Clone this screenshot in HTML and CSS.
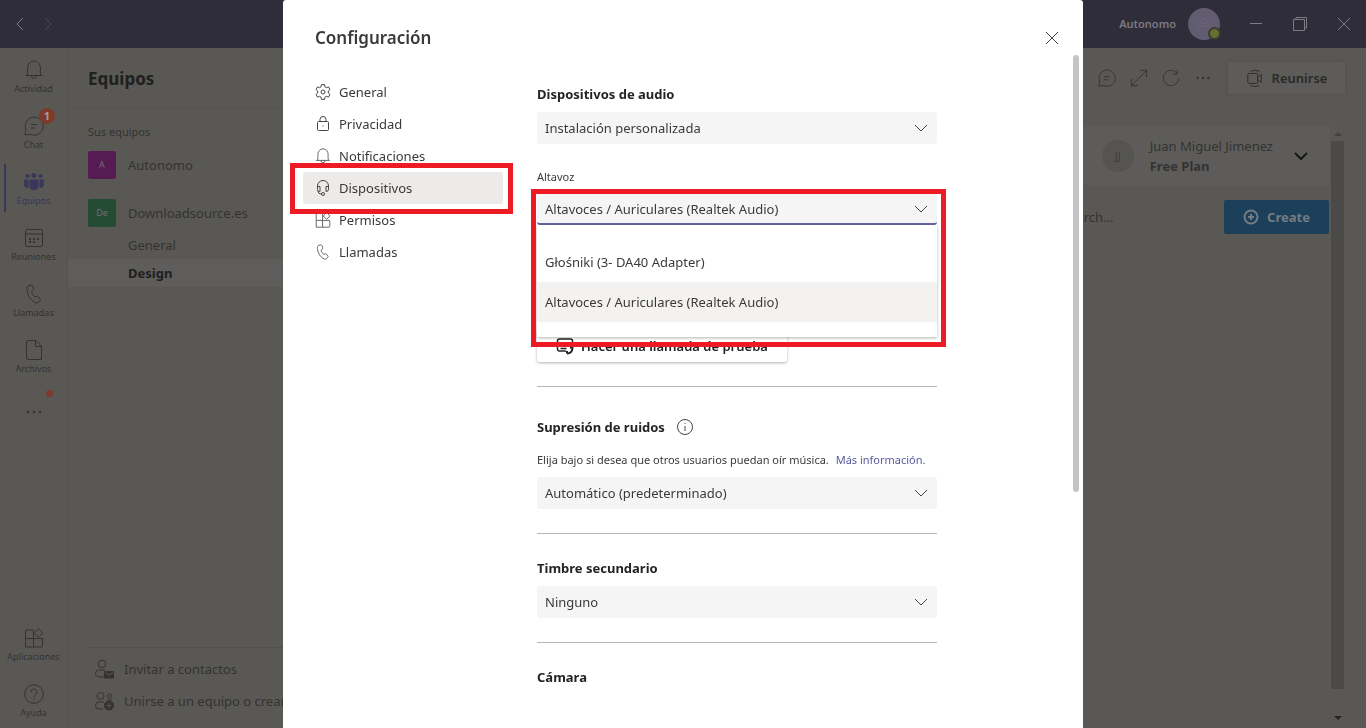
FILE: index.html
```html
<!DOCTYPE html>
<html lang="es">
<head>
    <meta charset="UTF-8">
    <meta name="viewport" content="width=device-width, initial-scale=1.0">
    <title>Configuración</title>
    <link rel="stylesheet" href="styles.css">
</head>
<body>
    <!-- shared icons -->
    <svg class="sprite" aria-hidden="true">
        <symbol id="i-bell" viewBox="0 0 20 20"><path d="M1.500 15.500h17M3 15.500c.6-1 .6-2 .6-3.500V8a6.400 7 0 0 1 12.800 0v4c0 1.500 0 2.500.6 3.500M7.500 15.500a2.500 3 0 0 0 5 0"/></symbol>
        <symbol id="i-chat" viewBox="0 0 20 20"><path d="M1 19l.9-5.500A9 9 0 1 1 6.500 18.300zM7 8.500h6M7 12h4"/></symbol>
        <symbol id="i-phone" viewBox="0 0 20 20"><path d="M5 1.500l2-.5c.8-.1 1.300.3 1.600 1l1 2.500c.2.700.1 1.200-.4 1.700L7.600 7.800c.5 2 1.700 3.800 3.300 5.200l2-.6c.7-.2 1.200 0 1.700.6l1.500 2c.4.600.4 1.300-.1 1.800l-1.200 1.200c-1 1-2.300 1.200-3.600.6C6.800 16.500 3.500 11.500 3 5.500 2.800 3.500 3.400 2 5 1.500z"/></symbol>
        <symbol id="i-apps" viewBox="0 0 20 20"><path d="M9.500 10.500V2h-7a1 1 0 0 0-1 1v16h16a1 1 0 0 0 1-1v-7.500h-17M9.500 10.500V19M14.500 .8l4.200 4.200-4.200 4.200L10.300 5z"/></symbol>
        <symbol id="i-down" viewBox="0 0 16 16"><path d="M2 5l6 6 6-6"/></symbol>
        <symbol id="i-close" viewBox="0 0 16 16"><path d="M2 2l12 12M14 2L2 14"/></symbol>
        <symbol id="i-dots" viewBox="0 0 20 20"><g fill="currentColor" stroke="none"><circle cx="4" cy="10" r="1.300"/><circle cx="10" cy="10" r="1.300"/><circle cx="16" cy="10" r="1.300"/></g></symbol>
    </svg>

    <div class="app">
        <header class="titlebar">
            <div class="history">
                <button aria-label="Atrás"><svg class="icon" viewBox="0 0 16 16"><path d="M11 2L5 8l6 6"/></svg></button>
                <button class="off" aria-label="Adelante"><svg class="icon" viewBox="0 0 16 16"><path d="M5 2l6 6-6 6"/></svg></button>
            </div>
            <div class="account">
                <span>Autonomo</span>
                <div class="me">
                    <svg class="icon" viewBox="0 0 16 16"><circle cx="8" cy="5" r="3"/><path d="M2 14v-2q0-2 2-2h8q2 0 2 2v2"/></svg>
                    <i class="status"></i>
                </div>
            </div>
            <div class="window-buttons">
                <button aria-label="Minimizar"><svg class="icon" viewBox="0 0 16 16"><path d="M2 7.500h12"/></svg></button>
                <button aria-label="Restaurar"><svg class="icon" viewBox="0 0 16 16"><path d="M1.500 3.500h11v11h-11zM4 3.500v-2h10.500V12h-2"/></svg></button>
                <button aria-label="Cerrar"><svg class="icon" viewBox="0 0 16 16"><use href="#i-close"/></svg></button>
            </div>
        </header>

        <div class="workspace">
            <nav class="rail">
                <a href="#"><svg class="icon big"><use href="#i-bell"/></svg>Actividad</a>
                <a href="#"><svg class="icon big"><use href="#i-chat"/></svg>Chat<b class="badge">1</b></a>
                <a href="#" class="current">
                    <svg class="icon big" viewBox="0 0 20 20"><g fill="currentColor" stroke="none"><circle cx="3.500" cy="4" r="2"/><circle cx="10" cy="3.500" r="2.500"/><circle cx="16.500" cy="4" r="2"/><path d="M0 7.500h4.500V16C1.500 16 0 14.500 0 12zM5.500 7.500h9V14q0 4-4.500 4t-4.500-4zM15.500 7.500H20V12c0 2.500-1.500 4-4.500 4z"/></g></svg>Equipos</a>
                <a href="#">
                    <svg class="icon big" viewBox="0 0 20 20"><rect x="1.500" y="1.500" width="17" height="17" rx="2"/><path d="M1.500 6h17"/><path d="M5 11h10M5 14h7" stroke-width="2" stroke-dasharray="2 2"/></svg>Reuniones</a>
                <a href="#"><svg class="icon big"><use href="#i-phone"/></svg>Llamadas</a>
                <a href="#">
                    <svg class="icon big" viewBox="0 0 20 20"><path d="M4 .5h8l5.500 5.500v13.500H4q-1.500 0-1.500-1.500V2Q2.500.5 4 .5zM11.500.5V6.500h6"/></svg>Archivos</a>
                <a href="#" class="more" aria-label="Más"><svg class="icon big"><use href="#i-dots"/></svg><i class="dot"></i></a>
                <a href="#" class="push"><svg class="icon big"><use href="#i-apps"/></svg>Aplicaciones</a>
                <a href="#">
                    <svg class="icon big" viewBox="0 0 20 20"><circle cx="10" cy="10" r="9.300"/><path d="M7 8a3 3 0 1 1 4.500 2.500q-1.500.8-1.500 2.500M10 14.500v1.500"/></svg>Ayuda</a>
            </nav>

            <aside class="teams">
                <h1>Equipos</h1>
                <h2>Sus equipos</h2>
                <a href="#" class="team"><span class="tile pink">A</span>Autonomo</a>
                <a href="#" class="team"><span class="tile green">De</span>Downloadsource.es</a>
                <div class="channels">
                    <a href="#">General</a>
                    <a href="#" class="selected">Design</a>
                </div>
                <div class="teams-footer">
                    <a href="#"><svg class="icon big" viewBox="0 0 20 20"><circle cx="8" cy="5" r="3.800"/><path d="M10 18H6q-4.500 0-4.500-3.500T4.500 11H11"/><path d="M10.500 12.500h9V19h-9z" fill="currentColor"/><path d="M11 13.500l4 2.500 4-2.500" stroke="#595855"/></svg>Invitar a contactos</a>
                    <a href="#"><svg class="icon big" viewBox="0 0 20 20"><circle cx="6.500" cy="5" r="3.500"/><circle cx="15.500" cy="5" r="2"/><path d="M9 18H5q-3.500 0-3.500-3.500T4.500 11H10M13 9h5"/><circle cx="15" cy="14.500" r="4.500" fill="currentColor"/><path d="M15 12v5M12.500 14.500h5" stroke="#595855"/></svg>Unirse a un equipo o crear uno</a>
                </div>
            </aside>

            <main class="content">
                <div class="toolbar">
                    <button aria-label="Conversación"><svg class="icon mid"><use href="#i-chat"/></svg></button>
                    <button aria-label="Expandir"><svg class="icon mid" viewBox="0 0 20 20"><path d="M2 18L18 2M11 1.500h7.500V9M1.500 11v7.500H9"/></svg></button>
                    <button aria-label="Actualizar"><svg class="icon mid" viewBox="0 0 20 20"><path d="M18.500 10A8.500 8.500 0 1 1 16.500 4.500M17 1v4.500h-5"/></svg></button>
                    <button aria-label="Más opciones"><svg class="icon mid"><use href="#i-dots"/></svg></button>
                    <button class="meet"><svg class="icon mid" viewBox="0 0 20 20"><rect x="2" y="5" width="11" height="11" rx="1"/><path d="M13 9l4-3v9l-4-3M5 2.500Q9 0 15 2.500M5 18.500q5 2 10 0"/></svg>Reunirse</button>
                </div>
                <div class="tab-view">
                    <div class="page">
                        <div class="profile">
                            <span class="initials">JJ</span>
                            <p>Juan Miguel Jimenez<br><b>Free Plan</b></p>
                            <svg class="icon heavy"><use href="#i-down"/></svg>
                        </div>
                        <div class="search-row">
                            <input type="text" placeholder="Search..." aria-label="Search">
                            <button class="create"><svg class="icon heavy" viewBox="0 0 16 16"><circle cx="8" cy="8" r="6.500"/><path d="M8 5v6M5 8h6"/></svg>Create</button>
                        </div>
                    </div>
                    <div class="scrollbar"><i class="arrow-up"></i><i class="thumb"></i><i class="arrow-down"></i></div>
                </div>
            </main>
        </div>
    </div>

    <div class="overlay">
        <div class="dialog" role="dialog" aria-labelledby="dialog-title">
            <div class="dialog-head">
                <h2 id="dialog-title">Configuración</h2>
                <button aria-label="Cerrar"><svg class="icon"><use href="#i-close"/></svg></button>
            </div>
            <div class="dialog-body">
                <nav class="sections">
                    <a href="#"><svg class="icon" viewBox="0 0 16 16"><path d="M6.500.6h3l.4 2.200 1.500.9 2.100-.8L15 5.500 13.300 7v2l1.700 1.500-1.500 2.600-2.100-.8-1.500.9-.4 2.200h-3l-.4-2.200-1.500-.9-2.100.8L1 10.500 2.700 9V7L1 5.500l1.500-2.600 2.100.8 1.500-.9z"/><circle cx="8" cy="8" r="2"/></svg>General</a>
                    <a href="#"><svg class="icon" viewBox="0 0 16 16"><rect x="2.500" y="5.500" width="11" height="9" rx="1"/><path d="M5 5.500V3.500a3 3 0 0 1 6 0v2M7.500 10h1"/></svg>Privacidad</a>
                    <a href="#"><svg class="icon"><use href="#i-bell"/></svg>Notificaciones</a>
                    <a href="#" class="active"><svg class="icon" viewBox="0 0 16 16"><path d="M2.500 8V6a5.500 5.500 0 0 1 11 0v3.500q0 2-2.500 2V6.500h2.500M2.500 6.500H5v5H4.500q-2 0-2-2V8M2.800 11q.7 3 3.200 3"/><circle cx="8" cy="14" r="1.500"/></svg>Dispositivos<i class="mark"></i></a>
                    <a href="#"><svg class="icon"><use href="#i-apps"/></svg>Permisos</a>
                    <a href="#"><svg class="icon"><use href="#i-phone"/></svg>Llamadas</a>
                </nav>

                <form class="settings">
                    <h3><label for="device">Dispositivos de audio</label></h3>
                    <div class="select">
                        <select id="device"><option>Instalación personalizada</option></select>
                        <svg class="icon"><use href="#i-down"/></svg>
                    </div>

                    <label class="small" for="speaker">Altavoz</label>
                    <div class="select open">
                        <select id="speaker"><option>Altavoces / Auriculares (Realtek Audio)</option></select>
                        <svg class="icon"><use href="#i-down"/></svg>
                        <ul class="menu" role="listbox" aria-label="Altavoz">
                            <li role="option">Głośniki (3- DA40 Adapter)</li>
                            <li role="option" aria-selected="true">Altavoces / Auriculares (Realtek Audio)</li>
                        </ul>
                        <i class="mark"></i>
                    </div>

                    <button type="button" class="test-call"><svg class="icon mid" viewBox="0 0 18 18"><path d="M1.500 12V4q0-2 2-2h11q2 0 2 2v6M1.500 11v1q0 2 2 2H10M4.500 8.500h8M4.500 11.500h6" stroke-width="1.500"/><path d="M11 16.500q5 0 5.500-5.500l-2.500-.5M11 16.500v-2.500" stroke-width="2"/></svg>Hacer una llamada de prueba</button>
                    <hr>

                    <h3 class="tall"><label for="noise">Supresión de ruidos</label>
                        <svg class="icon" viewBox="0 0 16 16"><circle cx="8" cy="8" r="7.500"/><path d="M8 7v5M8 4v1"/></svg></h3>
                    <p>Elija bajo si desea que otros usuarios puedan oír música. <a href="#">Más información.</a></p>
                    <div class="select">
                        <select id="noise"><option>Automático (predeterminado)</option></select>
                        <svg class="icon"><use href="#i-down"/></svg>
                    </div>
                    <hr>

                    <h3><label for="ring">Timbre secundario</label></h3>
                    <div class="select">
                        <select id="ring"><option>Ninguno</option></select>
                        <svg class="icon"><use href="#i-down"/></svg>
                    </div>
                    <hr>

                    <h3>Cámara</h3>
                </form>
            </div>
            <i class="dialog-thumb"></i>
        </div>
    </div>
</body>
</html>
```
FILE: styles.css
```css
* {
    box-sizing: border-box;
}
body {
    margin: 0;
    height: 100vh;
    overflow: hidden;
    font-family: "Noto Sans", "Open Sans", sans-serif;
    font-size: 13px;
    line-height: 20px;
    color: #343331;
    background-color: #595855;
}
h1, h2, h3, p, ul {
    margin: 0;
    padding: 0;
}
a {
    color: inherit;
    text-decoration: none;
}
button, select, input {
    font: inherit;
    color: inherit;
    background: none;
    border: 0;
    padding: 0;
}
button {
    display: flex;
    align-items: center;
    justify-content: center;
}
.sprite {
    position: absolute;
    width: 0;
    height: 0;
}
.icon {
    width: 16px;
    height: 16px;
    flex: none;
    fill: none;
    stroke: currentColor;
    stroke-width: 1;
}
.icon.mid {
    width: 18px;
    height: 18px;
}
.icon.big {
    width: 20px;
    height: 20px;
}
.icon.heavy {
    stroke-width: 2;
}

/* window */
.app {
    display: flex;
    flex-direction: column;
    height: 100%;
}
.titlebar {
    display: flex;
    align-items: center;
    height: 48px;
    flex: none;
    background-color: #2f2d39;
    color: #7c7a83;
}
.history {
    display: flex;
    flex: 1;
    gap: 12px;
    padding-left: 12px;
}
.history .off {
    opacity: 0.4;
}
.account {
    display: flex;
    align-items: center;
    gap: 12px;
    padding-right: 14px;
    font-size: 11px;
    font-weight: 600;
}
.me {
    position: relative;
    display: flex;
    align-items: center;
    justify-content: center;
    width: 32px;
    height: 32px;
    border-radius: 50%;
    background-color: #625c70;
    color: #6a6478;
}
.status {
    position: absolute;
    right: -1px;
    bottom: 0;
    width: 13px;
    height: 13px;
    border: 2px solid #3a3a35;
    border-radius: 50%;
    background-color: #67702f;
}
.window-buttons {
    display: flex;
}
.window-buttons button {
    width: 44px;
    height: 48px;
}
.workspace {
    display: flex;
    flex: 1;
    min-height: 0;
}

/* left rail */
.rail {
    display: flex;
    flex-direction: column;
    width: 68px;
    flex: none;
    border-right: 1px solid #53524f;
    font-size: 9px;
    line-height: 12px;
}
.rail a {
    position: relative;
    display: flex;
    flex-direction: column;
    align-items: center;
    gap: 3px;
    height: 56px;
    padding-top: 12px;
}
.rail .current {
    color: #39375a;
}
.rail .current::before {
    content: "";
    position: absolute;
    left: 4px;
    top: 4px;
    width: 2px;
    height: 48px;
    background-color: #39375a;
}
.rail .more {
    padding-top: 18px;
}
.rail .push {
    margin-top: auto;
}
.badge, .dot {
    position: absolute;
    border-radius: 50%;
    background-color: #7c3b2d;
}
.badge {
    left: 39px;
    top: 4px;
    width: 16px;
    height: 16px;
    font-size: 11px;
    line-height: 16px;
    text-align: center;
    color: #a59c97;
}
.dot {
    left: 46px;
    top: 6px;
    width: 7px;
    height: 7px;
}

/* teams list */
.teams {
    display: flex;
    flex-direction: column;
    width: 320px;
    flex: none;
    padding-bottom: 11px;
}
.teams h1 {
    height: 60px;
    padding-left: 20px;
    border-bottom: 1px solid #53524f;
    font-size: 17px;
    line-height: 62px;
    color: #20201f;
}
.teams h2 {
    padding: 16px 20px 0;
    font-size: 11px;
    font-weight: 400;
    line-height: 16px;
}
.team {
    display: flex;
    align-items: center;
    gap: 12px;
    margin: 11px 20px 9px;
}
.tile {
    width: 28px;
    height: 28px;
    border-radius: 2px;
    font-size: 9px;
    line-height: 28px;
    text-align: center;
    color: #746b73;
}
.pink {
    background-color: #571b54;
}
.green {
    background-color: #244b34;
}
.channels {
    margin-top: -5px;
}
.channels a {
    display: block;
    padding-left: 60px;
    line-height: 28px;
}
.channels .selected {
    background-color: #5e5d5b;
    font-weight: 700;
    color: #20201f;
}
.teams-footer {
    margin: auto 20px 0;
    padding-top: 5px;
    border-top: 1px solid #504f4d;
}
.teams-footer a {
    display: flex;
    align-items: center;
    gap: 10px;
    height: 32px;
    padding-left: 6px;
}

/* right side */
.content {
    display: flex;
    flex-direction: column;
    flex: 1;
    min-width: 0;
    padding-right: 21px;
}
.toolbar {
    display: flex;
    align-items: center;
    justify-content: flex-end;
    height: 60px;
    flex: none;
}
.toolbar button {
    width: 32px;
    height: 32px;
}
.toolbar .meet {
    gap: 8px;
    width: 117px;
    margin-left: 9px;
    background-color: #5d5c5a;
    box-shadow: 0 0 3px #4d4c4a;
    font-weight: 600;
    color: #2a2928;
}
.tab-view {
    display: flex;
    flex: 1;
    margin-top: 18px;
}
.page {
    flex: 1;
}
.profile {
    display: flex;
    align-items: center;
    justify-content: flex-end;
    gap: 13px;
    height: 59px;
    padding-right: 21px;
    background-color: #5d5c5a;
}
.profile .icon {
    margin-left: 7px;
    color: #181817;
}
.initials {
    width: 32px;
    margin-right: 3px;
    border-radius: 50%;
    background-color: #555451;
    font-size: 11px;
    line-height: 32px;
    text-align: center;
    color: #3f3e3c;
}
.search-row {
    display: flex;
    justify-content: flex-end;
    padding: 15px 1px 0 0;
}
.search-row input {
    width: 162px;
}
.search-row input::placeholder {
    color: #343331;
}
.create {
    gap: 8px;
    width: 105px;
    height: 34px;
    border-radius: 2px;
    background-color: #1c4059;
    color: #747d82;
    font-weight: 700;
}
.scrollbar {
    display: flex;
    flex-direction: column;
    align-items: center;
    width: 15px;
    padding: 6px 0 8px;
}
.thumb {
    flex: 1;
    width: 13px;
    margin: 5px 0 27px;
    background-color: #4b4a48;
}
.arrow-up, .arrow-down {
    border: 4px solid transparent;
}
.arrow-up {
    border-top: 0;
    border-bottom: 4px solid #444341;
}
.arrow-down {
    border-bottom: 0;
    border-top: 4px solid #252524;
}

/* settings dialog */
.overlay {
    position: fixed;
    inset: 0;
    display: flex;
    justify-content: center;
}
.dialog {
    position: relative;
    width: 800px;
    background-color: #fff;
    border-radius: 3px 3px 0 0;
    color: #3b3a39;
    overflow: hidden;
}
.dialog-head {
    display: flex;
    align-items: center;
    justify-content: space-between;
    height: 76px;
    padding: 0 23px 0 32px;
}
.dialog-head h2 {
    font-size: 17px;
    font-weight: 600;
    line-height: 24px;
}
.dialog .icon {
    color: #484644;
}
.dialog-body {
    display: flex;
    gap: 34px;
    padding-left: 20px;
}
.sections {
    width: 200px;
}
.sections a {
    position: relative;
    display: flex;
    align-items: center;
    gap: 8px;
    height: 32px;
    padding-left: 12px;
    border-radius: 3px;
}
.sections .active {
    background-color: #edebe9;
}
.mark {
    position: absolute;
    z-index: 2;
    border: 5px solid #ed1c24;
    pointer-events: none;
}
.sections .mark {
    inset: -9px -10px -10px -13px;
}
.settings {
    width: 400px;
    padding-top: 8px;
}
.settings h3 {
    margin-bottom: 8px;
    font-size: 13px;
    font-weight: 700;
    line-height: 20px;
    color: #252423;
}
.settings .tall {
    display: flex;
    align-items: center;
    gap: 12px;
    height: 32px;
}
.settings p {
    margin: 9px 0;
    font-size: 11px;
    line-height: 16px;
    white-space: nowrap;
}
.settings p a {
    margin-left: 4px;
    color: #5b5a9c;
}
.small {
    display: block;
    margin: 25px 0 8px;
    font-size: 11px;
    line-height: 16px;
}
.select {
    position: relative;
    display: grid;
    align-items: center;
}
.select select {
    grid-area: 1 / 1;
    width: 100%;
    height: 32px;
    padding: 0 32px 0 8px;
    appearance: none;
    background-color: #f5f5f5;
    border-radius: 3px;
}
.select > .icon {
    grid-area: 1 / 1;
    justify-self: end;
    margin-right: 8px;
    pointer-events: none;
}
.open select {
    border-bottom: 2px solid #6264a7;
    padding-top: 2px;
}
.open .mark {
    inset: -4px -9px -122px -6px;
}
.menu {
    position: absolute;
    z-index: 1;
    top: 100%;
    left: 0;
    right: 0;
    padding: 17px 0 15px;
    background-color: #fff;
    box-shadow: 0 1px 3px rgba(0, 0, 0, 0.3);
    list-style: none;
}
.menu li {
    padding: 0 8px;
    line-height: 40px;
}
.menu [aria-selected] {
    background-color: #f3f2f1;
}
.test-call {
    gap: 7px;
    height: 32px;
    margin-top: 105px;
    padding: 0 19px;
    border-radius: 2px;
    box-shadow: 0 1px 3px rgba(0, 0, 0, 0.3);
    font-weight: 600;
    color: #252423;
}
.dialog .test-call .icon {
    color: #252423;
}
.settings hr {
    height: 1px;
    margin: 24px 0;
    border: 0;
    background-color: #b9b8b7;
}
.dialog-thumb {
    position: absolute;
    top: 55px;
    right: 4px;
    width: 6px;
    height: 60%;
    border-radius: 3px;
    background-color: #c4c4c4;
}
```
